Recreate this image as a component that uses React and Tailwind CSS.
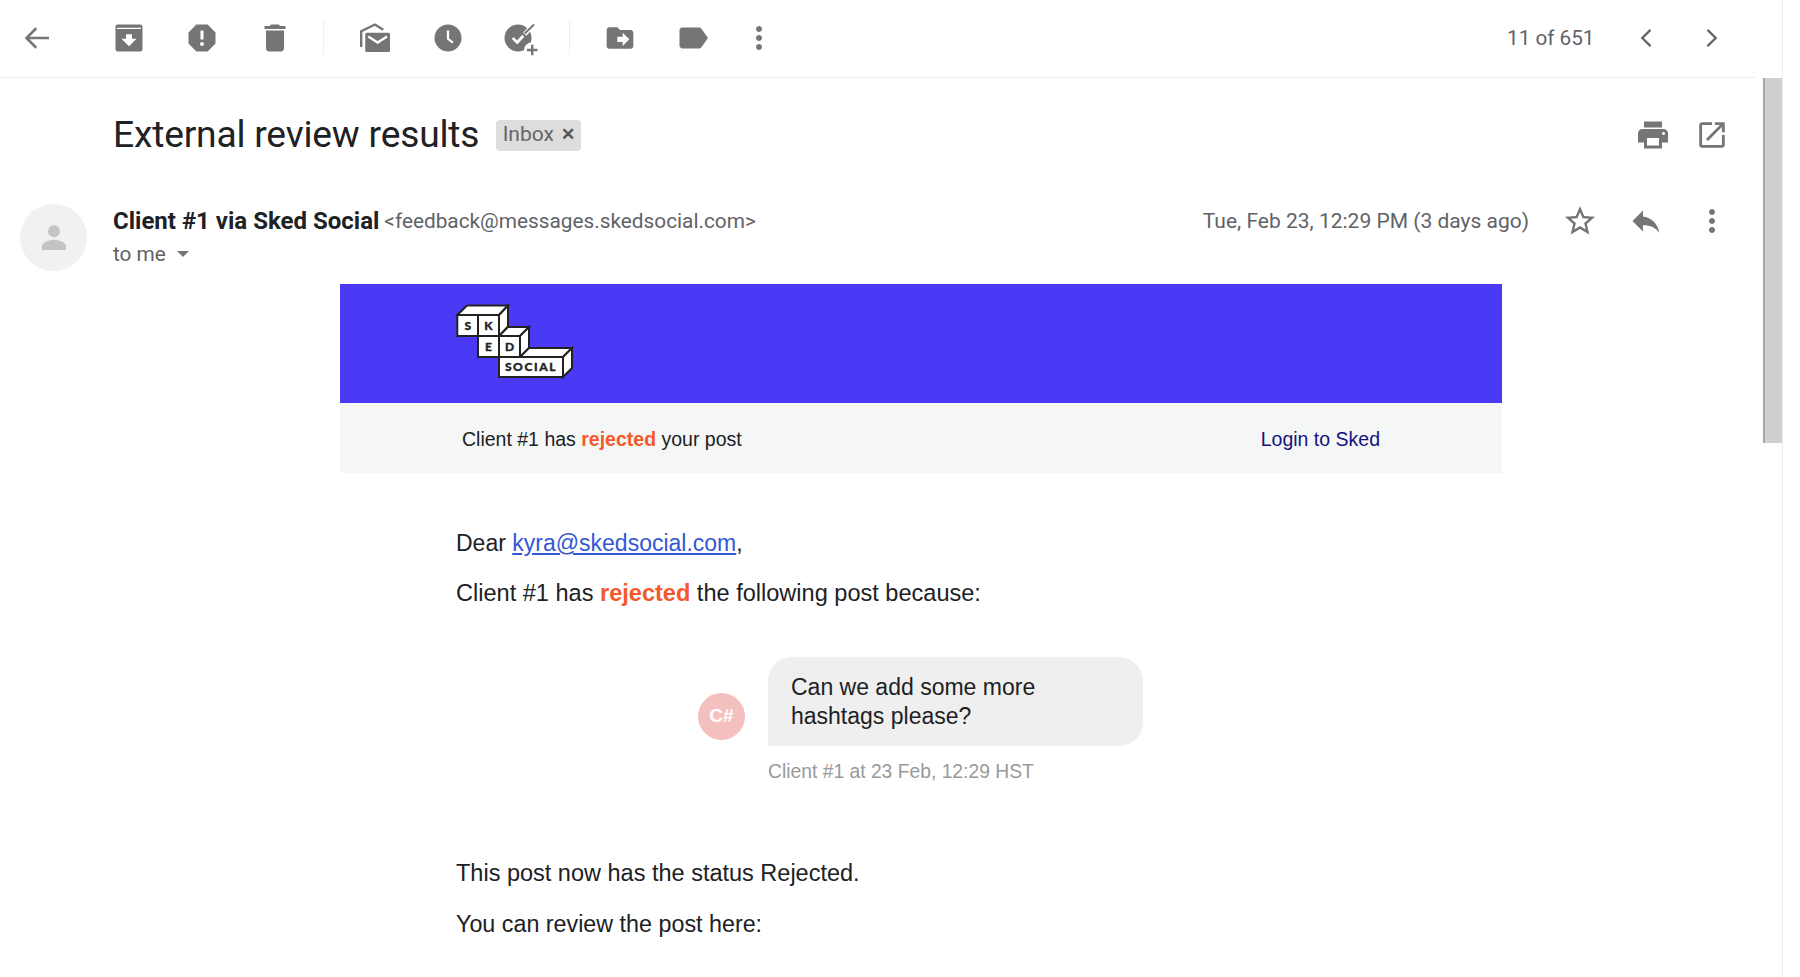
const ICON = 'fill-[#757575]';

function Icon({ size = 36, className = ICON, children }) {
  return (
    <svg width={size} height={size} viewBox="0 0 24 24" className={`shrink-0 ${className}`}>
      {children}
    </svg>
  );
}

function ToolButton({ children }) {
  return <div className="flex w-[73px] shrink-0 items-center justify-center">{children}</div>;
}

function Divider({ className }) {
  return <div className={`h-[33px] w-px shrink-0 bg-[#eeeeee] ${className}`} />;
}

const morePath =
  'M12 8c1.1 0 2-.9 2-2s-.9-2-2-2-2 .9-2 2 .9 2 2 2zm0 2c-1.1 0-2 .9-2 2s.9 2 2 2 2-.9 2-2-.9-2-2-2zm0 6c-1.1 0-2 .9-2 2s.9 2 2 2 2-.9 2-2-.9-2-2-2z';

function Toolbar() {
  return (
    <div className="flex h-[78px] items-center border-b border-[#eeeeee] pb-[2px]">
      <div className="flex w-[74px] shrink-0 justify-center">
        <svg width="36" height="36" viewBox="0 0 24 24" fill="none" stroke="#757575" strokeWidth="1.7">
          <path d="M20 12H5.5M11.5 5.5 5 12l6.5 6.5" />
        </svg>
      </div>
      <div className="w-[18px] shrink-0" />
      <ToolButton>
        <Icon>
          <path d="M4.5 3h15A1.5 1.5 0 0 1 21 4.500v15a1.500 1.500 0 0 1-1.500 1.500h-15A1.500 1.500 0 0 1 3 19.500v-15A1.500 1.500 0 0 1 4.500 3zM4 5.200v.8h16v-.8zM12 17.500 17 12.500h-3V9.500h-4v3H7z" fillRule="evenodd" />
        </Icon>
      </ToolButton>
      <ToolButton>
        <Icon>
          <path d="M15.730 3H8.270L3 8.270v7.460L8.270 21h7.460L21 15.730V8.270L15.730 3zM12 17.300c-.72 0-1.300-.58-1.300-1.300 0-.72.58-1.300 1.300-1.300.72 0 1.300.58 1.300 1.300 0 .72-.58 1.300-1.300 1.300zm1-4.300h-2V7h2v6z" />
        </Icon>
      </ToolButton>
      <ToolButton>
        <Icon>
          <path d="M6 19c0 1.100.9 2 2 2h8c1.100 0 2-.9 2-2V7H6v12zM19 4h-3.500l-1-1h-5l-1 1H5v2h14V4z" />
        </Icon>
      </ToolButton>
      <Divider className="ml-[12px] mr-[14px]" />
      <ToolButton>
        <Icon>
          <path d="M2.800 18V7.500L12 3l5.500 3.500" fill="none" stroke="#757575" strokeWidth="1.6" />
          <rect x="5.500" y="8.500" width="16.500" height="12.800" rx="1" />
          <path d="M7.500 11l6.300 4 6.200-4" fill="none" stroke="#ffffff" strokeWidth="1.600" />
        </Icon>
      </ToolButton>
      <ToolButton>
        <Icon>
          <circle cx="12" cy="12" r="9" />
          <path d="M12 7v5.500l3.200 2.600" fill="none" stroke="#ffffff" strokeWidth="1.500" />
        </Icon>
      </ToolButton>
      <ToolButton>
        <Icon>
          <circle cx="10" cy="12" r="9" />
          <path d="M6.500 12l3 3 4-4.500" fill="none" stroke="#ffffff" strokeWidth="1.800" />
          <path d="M14.500 9.500 21.500 1.500" fill="none" stroke="#ffffff" strokeWidth="3" />
          <path d="M14.500 9 20.700 3" fill="none" stroke="#757575" strokeWidth="1.300" />
          <circle cx="19" cy="20" r="5" className="fill-white" />
          <path d="M19.500 16.500v7M16 20h7" fill="none" stroke="#757575" strokeWidth="1.600" />
        </Icon>
      </ToolButton>
      <Divider className="ml-[12px] mr-[13px]" />
      <ToolButton>
        <Icon size={32}>
          <path d="M20 6h-8l-2-2H4c-1.100 0-2 .9-2 2v12c0 1.100.9 2 2 2h16c1.100 0 2-.9 2-2V8c0-1.100-.9-2-2-2zm-6 12v-3h-4v-4h4V8l5 5-5 5z" />
        </Icon>
      </ToolButton>
      <ToolButton>
        <Icon>
          <path d="M17.630 5.840C17.270 5.330 16.670 5 16 5L5 5.010C3.900 5.010 3 5.900 3 7v10c0 1.100.9 1.990 2 1.990L16 19c.67 0 1.270-.33 1.630-.84L22 12l-4.370-6.160z" />
        </Icon>
      </ToolButton>
      <div className="flex w-[60px] shrink-0 justify-center">
        <Icon>
          <path d={morePath} />
        </Icon>
      </div>
      <div className="ml-[718px] mt-[3px] w-[92px] shrink-0 text-[20.700px] text-[#5f6368]">11 of 651</div>
      <div className="ml-[28px] flex w-[40px] shrink-0 justify-center">
        <svg width="28" height="28" viewBox="0 0 24 24" fill="none" stroke="#666666" strokeWidth="2">
          <path d="M15 5l-7 7 7 7" />
        </svg>
      </div>
      <div className="ml-[24px] flex w-[40px] shrink-0 justify-center">
        <svg width="28" height="28" viewBox="0 0 24 24" fill="none" stroke="#666666" strokeWidth="2">
          <path d="M9 5l7 7-7 7" />
        </svg>
      </div>
    </div>
  );
}

function SubjectRow() {
  return (
    <div className="flex h-[92px] items-center pl-[113px] pt-[22px]">
      <h1 className="text-[37.200px] font-normal tracking-[-0.2px] text-[#202124]">External review results</h1>
      <span className="ml-[17px] flex h-[31px] w-[85px] items-center justify-center gap-[7px] rounded-[4px] bg-[#dddddd] text-[21px] text-[#666666]">
        Inbox
        <span className="text-[17px] font-bold text-[#555555]">✕</span>
      </span>
      <div className="ml-auto flex pr-[13px]">
        <div className="flex w-[60px] justify-center pl-[1px]">
          <Icon>
            <path d="M19 8H5c-1.660 0-3 1.340-3 3v6h4v4h12v-4h4v-6c0-1.660-1.340-3-3-3zm-3 11H8v-5h8v5zm3-7c-.55 0-1-.45-1-1s.45-1 1-1 1 .45 1 1-.45 1-1 1zm-1-9H6v4h12V3z" />
          </Icon>
        </div>
        <div className="flex w-[60px] items-center justify-center">
          <Icon size={34}>
            <path d="M19 19H5V5h7V3H5c-1.110 0-2 .9-2 2v14c0 1.100.89 2 2 2h14c1.100 0 2-.9 2-2v-7h-2v7zM14 3v2h3.590l-9.830 9.830 1.410 1.410L19 6.410V10h2V3h-7z" />
          </Icon>
        </div>
      </div>
    </div>
  );
}

function SenderRow() {
  return (
    <div className="flex h-[114px] pt-[34px] pl-[20px]">
      <div className="flex h-[67px] w-[67px] shrink-0 items-center justify-center rounded-full bg-[#f1f1f1]">
        <svg width="36" height="36" viewBox="0 0 24 24" className="fill-[#c4c4c4]">
          <circle cx="12" cy="7.500" r="4" />
          <path d="M4 20v-2.500c0-2.800 5-4.300 8-4.300s8 1.500 8 4.300V20z" />
        </svg>
      </div>
      <div className="ml-[26px] flex-1 pt-[6px]">
        <div className="flex items-center text-[20.800px] leading-[22px] text-[#5f6368]">
          <span className="text-[24px] font-bold text-[#202124]">Client #1 via Sked Social</span>
          <span className="ml-[5px]">&lt;feedback@messages.skedsocial.com&gt;</span>
        </div>
        <div className="mt-[10px] flex items-center text-[20.800px] leading-[22px] text-[#5f6368]">
          to me
          <svg width="24" height="24" viewBox="0 0 24 24" className="ml-[5px] fill-[#777777]">
            <path d="M6 9l6 6 6-6z" />
          </svg>
        </div>
      </div>
      <div className="flex h-[36px] items-start pr-[13px]">
        <span className="mt-[4px] text-[21px] leading-[26px] text-[#5f6368]">Tue, Feb 23, 12:29 PM (3 days ago)</span>
        <div className="ml-[21px] flex w-[60px] justify-center -mt-[1px]">
          <Icon>
            <path d="M22 9.240l-7.190-.62L12 2 9.190 8.630 2 9.240l5.460 4.730L5.820 21 12 17.270 18.180 21l-1.630-7.030L22 9.240zM12 15.400l-3.760 2.270 1-4.280-3.320-2.880 4.380-.38L12 6.100l1.710 4.040 4.380.38-3.320 2.880 1 4.280L12 15.400z" />
          </Icon>
        </div>
        <div className="ml-[6px] flex w-[60px] justify-center -mt-[1px]">
          <Icon>
            <path d="M10 9V5l-7 7 7 7v-4.100c5 0 8.500 1.600 11 5.100-1-5-4-10-11-11z" />
          </Icon>
        </div>
        <div className="ml-[6px] flex w-[60px] justify-center -mt-[1px]">
          <Icon>
            <path d={morePath} />
          </Icon>
        </div>
      </div>
    </div>
  );
}

function SkedLogo() {
  const box = 'fill-white stroke-[#222222] stroke-[2]';
  const letter = 'fill-[#222222] stroke-[#222222] stroke-[0.3] text-[12px] font-black';
  return (
    <svg width="140" height="90" viewBox="10 10 140 90" className="ml-[110px] mt-[16px]">
      <g className={box} strokeLinejoin="miter">
        <path d="M17.300 25 27 15.500h41L59 25z" />
        <path d="M59 25l9-9.500v21L59 46z" />
        <rect x="17.300" y="25" width="20.700" height="21" />
        <rect x="38" y="25" width="21" height="21" />
        <path d="M59 46l9-9h21l-9 9z" />
        <path d="M80 46l9-9v21l-9 9z" />
        <rect x="38" y="46" width="21" height="21" />
        <rect x="59" y="46" width="21" height="21" />
        <path d="M80 67l9-9h43l-9 9z" />
        <path d="M123 67l9-9v20l-9 9z" />
        <rect x="59" y="67" width="64" height="20" />
      </g>
      <g className={`${letter} font-['Lato','Liberation_Sans',sans-serif]`} textAnchor="middle">
        <text x="27.700" y="40">S</text>
        <text x="48.500" y="40">K</text>
        <text x="48.500" y="61">E</text>
        <text x="69.500" y="61">D</text>
        <text x="91" y="81" letterSpacing="1.600">SOCIAL</text>
      </g>
    </svg>
  );
}

function EmailBody() {
  return (
    <div className="ml-[340px] w-[1162px] font-['Liberation_Sans',Arial,sans-serif] text-[23.300px] text-[#202124]">
      <div className="h-[119px] overflow-hidden bg-[#4b3af5]">
        <SkedLogo />
      </div>
      <div className="flex h-[70px] items-center justify-between bg-[#f5f7f7] pl-[122px] pr-[122px] pt-[3px] text-[19.500px]">
        <span>
          Client #1 has <b className="text-[#f4582b]">rejected</b> your post
        </span>
        <a className="text-[#14147e]">Login to Sked</a>
      </div>
      <div className="pl-[116px]">
        <p className="mt-[57px] text-[23px] leading-[26px]">
          Dear <a className="text-[#3457d5] underline">kyra@skedsocial.com</a>,
        </p>
        <p className="mt-[24px] text-[23.550px] leading-[26px]">
          Client #1 has <b className="text-[#f4582b]">rejected</b> the following post because:
        </p>
        <div className="mt-[51px] ml-[242px] flex items-start">
          <div className="mt-[36px] flex h-[47px] w-[47px] shrink-0 items-center justify-center rounded-full bg-[#f4c0bf] text-[19px] font-bold text-white">
            C#
          </div>
          <div className="ml-[23px] h-[89px] w-[375px] rounded-[24px] rounded-bl-none bg-[#efefef] px-[23px] pt-[16px] text-[23px] leading-[29px]">
            Can we add some more
            <br />
            hashtags please?
          </div>
        </div>
        <p className="mt-[14px] ml-[312px] text-[19.300px] leading-[24px] text-[#999999]">Client #1 at 23 Feb, 12:29 HST</p>
        <p className="mt-[76px] text-[23.500px] leading-[26px]">This post now has the status Rejected.</p>
        <p className="mt-[25px] leading-[26px]">You can review the post here:</p>
      </div>
    </div>
  );
}

export default function App() {
  return (
    <div className="flex h-[977px] w-[1800px] overflow-hidden bg-white font-['Roboto',sans-serif]">
      <div className="w-[1755px] shrink-0">
        <Toolbar />
        <SubjectRow />
        <SenderRow />
        <EmailBody />
      </div>
      <div className="h-full w-[28px] shrink-0 border-r border-[#eeeeee] pl-[8px] pt-[78px]">
        <div className="h-[365px] w-[19px] border-l-2 border-[#a8a8a8] bg-[#cfcfcf]" />
      </div>
    </div>
  );
}
